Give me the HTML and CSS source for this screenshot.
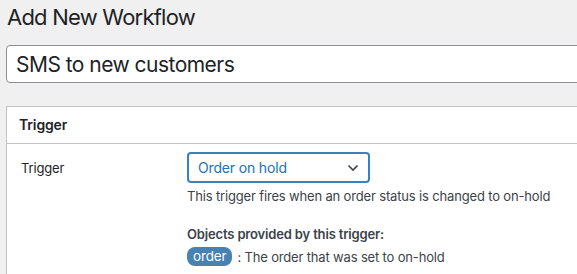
FILE: index.html
```html
<!DOCTYPE html>
<html lang="en">
<head>
    <meta charset="UTF-8">
    <title>Add New Workflow</title>
    <link rel="stylesheet" href="styles.css">
</head>
<body>
<div class="wrap">
    <h1 class="page-title">Add New Workflow</h1>

    <input type="text" class="title-input" value="SMS to new customers">

    <div class="postbox">
        <div class="postbox-header">Trigger</div>
        <div class="field-row">
            <div class="field-label">Trigger</div>
            <div class="field-body">
                <div class="select-box">
                    <span>Order on hold</span>
                    <svg class="chevron" width="12" height="8" viewBox="0 0 12 8">
                        <path d="M1.5 1.5 L6 6 L10.5 1.5" fill="none" stroke="#3c434a" stroke-width="1.6"/>
                    </svg>
                </div>
                <p class="description">This trigger fires when an order status is changed to on-hold</p>
                <p class="objects-title">Objects provided by this trigger:</p>
                <p class="objects-line"><span class="badge">order</span> : The order that was set to on-hold</p>
            </div>
        </div>
    </div>
</div>
</body>
</html>
```

FILE: styles.css
```css
* {
    box-sizing: border-box;
}
html, body {
    margin: 0;
    padding: 0;
    height: 100%;
    background-color: #f0f0f1;
    font-family: Inter, "Noto Sans", sans-serif;
    color: #3c434a;
    overflow: hidden;
}
.wrap {
    height: 100%;
    padding: 0 0 0 6px;
    overflow: hidden;
}
.page-title {
    margin: 0;
    padding: 3px 0 0 1px;
    font-size: 22px;
    font-weight: 400;
    line-height: 29px;
    letter-spacing: -0.035em;
    color: #1d2327;
}
.title-input {
    display: block;
    margin-top: 13px;
    width: 620px;
    height: 38px;
    padding: 0 9px;
    font-family: inherit;
    font-size: 21px;
    letter-spacing: -0.025em;
    color: #1d2327;
    background: #fff;
    border: 1px solid #8c8f94;
    border-radius: 4px;
}
.postbox {
    margin-top: 23px;
    width: 620px;
    padding-bottom: 30px;
    background: #fff;
    border: 1px solid #c3c4c7;
}
.postbox-header {
    height: 37px;
    padding: 0 0 0 12px;
    font-size: 14px;
    font-weight: 600;
    line-height: 36px;
    letter-spacing: -0.01em;
    color: #1d2327;
    border-bottom: 1px solid #c3c4c7;
}
.field-row {
    display: flex;
    padding: 8px 0 0 14px;
    letter-spacing: -0.01em;
}
.field-label {
    width: 166px;
    padding-top: 7px;
    font-size: 13px;
    line-height: 18px;
    color: #1d2327;
}
.field-body {
    font-size: 13px;
    line-height: 18px;
}
.select-box {
    display: flex;
    align-items: center;
    justify-content: space-between;
    width: 183px;
    height: 31px;
    padding: 0 9px 0 9px;
    border: 2px solid #3582c4;
    border-radius: 4px;
    font-size: 14px;
    color: #2271b1;
}
.chevron {
    display: block;
}
.description {
    margin: 4px 0 0;
    color: #3c434a;
}
.objects-title {
    margin: 20px 0 0;
    font-weight: 600;
    color: #3c434a;
}
.objects-line {
    margin: 4px 0 0;
    display: flex;
    align-items: center;
    gap: 5px;
}
.badge {
    display: inline-block;
    padding: 0 6px;
    height: 19px;
    line-height: 19px;
    border-radius: 8px;
    background: #4682b4;
    color: #fff;
    font-size: 13.5px;
}
```
